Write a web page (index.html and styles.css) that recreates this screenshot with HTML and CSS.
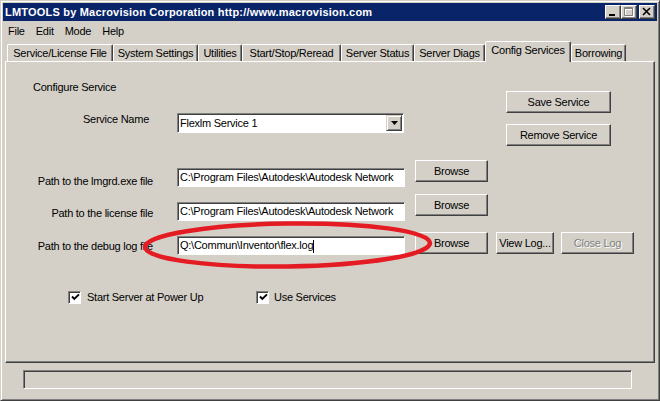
FILE: index.html
```html
<!DOCTYPE html>
<html lang="en">
<head>
    <meta charset="UTF-8">
    <title>LMTOOLS</title>
    <link rel="stylesheet" href="styles.css">
</head>
<body>

    <div class="window">
        <div class="titlebar">
            <span class="title">LMTOOLS by Macrovision Corporation http://www.macrovision.com</span>
            <div class="caption-buttons">
                <span class="cap-btn"><svg width="14" height="12" viewBox="0 0 14 12"><rect x="3" y="8" width="6" height="2" fill="#000"/></svg></span>
                <span class="cap-btn"><svg width="14" height="12" viewBox="0 0 14 12"><path d="M3.5 2.5h8v8h-8z M3 3.5h9" fill="none" stroke="#fff" stroke-width="1"/><path d="M2.5 1.5h8v8h-8z M2 2.5h9" fill="none" stroke="#808080" stroke-width="1"/></svg></span>
                <span class="cap-btn close"><svg width="14" height="12" viewBox="0 0 14 12"><path d="M3 2 L10 9 M10 2 L3 9" stroke="#000" stroke-width="1.6"/></svg></span>
            </div>
        </div>

        <div class="menubar">
            <span>File</span>
            <span>Edit</span>
            <span>Mode</span>
            <span>Help</span>
        </div>

        <div class="tabs">
            <div class="tab" style="width:106px">Service/License File</div>
            <div class="tab" style="width:85px">System Settings</div>
            <div class="tab" style="width:44px">Utilities</div>
            <div class="tab" style="width:99px">Start/Stop/Reread</div>
            <div class="tab" style="width:73px">Server Status</div>
            <div class="tab" style="width:71px">Server Diags</div>
            <div class="tab active" style="width:86px">Config Services</div>
            <div class="tab" style="width:55px">Borrowing</div>
        </div>

        <div class="panel">
            <div class="top">
                <div class="top-left">
                    <div class="heading">Configure Service</div>
                    <div class="service-row">
                        <div class="label">Service Name</div>
                        <div class="combo">
                            <span class="combo-text">Flexlm Service 1</span>
                            <span class="drop-btn"><svg width="7" height="4" viewBox="0 0 7 4"><path d="M0 0h7L3.5 4z" fill="#000"/></svg></span>
                        </div>
                    </div>
                </div>
                <div class="top-right">
                    <div class="btn save">Save Service</div>
                    <div class="btn remove">Remove Service</div>
                </div>
            </div>

            <div class="path-row row-exe">
                <div class="label">Path to the lmgrd.exe file</div>
                <div class="field">C:\Program Files\Autodesk\Autodesk Network</div>
                <div class="btn browse">Browse</div>
            </div>

            <div class="path-row row-lic">
                <div class="label">Path to the license file</div>
                <div class="field">C:\Program Files\Autodesk\Autodesk Network</div>
                <div class="btn browse">Browse</div>
            </div>

            <div class="path-row row-log">
                <div class="label">Path to the debug log file</div>
                <div class="field">Q:\Commun\Inventor\flex.log<span class="caret"></span></div>
                <div class="btn browse">Browse</div>
                <div class="btn view-log">View Log...</div>
                <div class="btn close-log disabled">Close Log</div>
            </div>

            <div class="checks">
                <label class="check">
                    <span class="box"><svg width="9" height="9" viewBox="0 0 9 9"><path d="M1 3.5 L3.3 6 L8 1.3" fill="none" stroke="#000" stroke-width="1.9"/></svg></span>
                    <span class="check-text">Start Server at Power Up</span>
                </label>
                <label class="check">
                    <span class="box"><svg width="9" height="9" viewBox="0 0 9 9"><path d="M1 3.5 L3.3 6 L8 1.3" fill="none" stroke="#000" stroke-width="1.9"/></svg></span>
                    <span class="check-text">Use Services</span>
                </label>
            </div>
        </div>

        <div class="statusbar"></div>
    </div>

    <!-- red marker someone drew over the screenshot -->
    <svg class="annotation" width="660" height="401" viewBox="0 0 660 401">
        <ellipse cx="287.5" cy="245" rx="142.5" ry="21.5" transform="rotate(-0.8 287.5 245)" fill="none" stroke="#e41b23" stroke-width="4.5"/>
    </svg>

</body>
</html>
```

FILE: styles.css
```css
* {
    margin: 0;
    padding: 0;
    box-sizing: border-box;
}
body {
    font-family: 'Liberation Sans', Arial, sans-serif;
    font-size: 11px;
    letter-spacing: -0.25px;
    color: #000;
    background: #d4d0c8;
    width: 660px;
    height: 401px;
    overflow: hidden;
    position: relative;
}
.window {
    width: 660px;
    height: 401px;
    background: #d4d0c8;
    border: 1px solid;
    border-color: #d4d0c8 #404040 #404040 #d4d0c8;
    box-shadow: inset 1px 1px #fff, inset -1px -1px #808080;
    padding: 2px;
    display: flex;
    flex-direction: column;
}

/* title bar */
.titlebar {
    height: 18px;
    background: #0a246a;
    color: #fff;
    display: flex;
    align-items: center;
    justify-content: space-between;
    padding: 0 2px;
}
.title {
    font-weight: bold;
    font-size: 11px;
    letter-spacing: 0.2px;
}
.caption-buttons { display: flex; }
.cap-btn {
    width: 16px;
    height: 14px;
    background: #d4d0c8;
    border: 1px solid;
    border-color: #fff #404040 #404040 #fff;
    box-shadow: inset -1px -1px #808080;
    display: flex;
}
.cap-btn.close { margin-left: 2px; }

/* menu */
.menubar {
    height: 19px;
    display: flex;
    align-items: center;
    gap: 11px;
    padding-left: 5px;
}

/* tabs */
.tabs {
    display: flex;
    align-items: flex-end;
    height: 20px;
    margin: 1px 0 0 4px;
    position: relative;
    z-index: 1;
}
.tab {
    height: 17px;
    border: 1px solid;
    border-bottom: none;
    border-color: #fff #404040 transparent #fff;
    box-shadow: inset -1px 0 #808080;
    border-radius: 2px 2px 0 0;
    text-align: center;
    line-height: 16px;
    white-space: nowrap;
}
.tab.active {
    height: 21px;
    margin-bottom: -1px;
    background: #d4d0c8;
    line-height: 17px;
}

/* tab page */
.panel {
    width: 650px;
    height: 302px;
    margin-left: 2px;
    border: 1px solid;
    border-color: #fff #404040 #404040 #fff;
    box-shadow: inset -1px -1px #808080;
    padding-top: 19px;
}
.label {
    line-height: 13px;
    text-align: right;
    white-space: nowrap;
}
.top { display: flex; }
.top-left { width: 400px; }
.heading {
    margin-left: 27px;
    line-height: 13px;
}
.service-row {
    display: flex;
    margin-top: 19px;
}
.service-row .label { width: 143px; }
.combo {
    margin-left: 28px;
    width: 227px;
    height: 20px;
    background: #fff;
    border: 1px solid;
    border-color: #808080 #fff #fff #808080;
    box-shadow: inset 1px 1px #404040;
    display: flex;
    align-items: center;
    padding-left: 2px;
}
.combo-text { flex: 1; }
.drop-btn {
    width: 16px;
    height: 16px;
    margin-right: 1px;
    background: #d4d0c8;
    border: 1px solid;
    border-color: #d4d0c8 #404040 #404040 #d4d0c8;
    box-shadow: inset 1px 1px #fff, inset -1px -1px #808080;
    display: flex;
    justify-content: center;
    align-items: center;
}
.top-right {
    margin-left: 100px;
    display: flex;
    flex-direction: column;
}
.btn {
    height: 22px;
    background: #d4d0c8;
    border: 1px solid;
    border-color: #fff #404040 #404040 #fff;
    box-shadow: inset -1px -1px #808080;
    display: flex;
    justify-content: center;
    align-items: center;
    white-space: nowrap;
}
.btn.save { width: 105px; margin-top: 10px; }
.btn.remove { width: 105px; margin-top: 11px; }
.btn.disabled {
    color: #808080;
    text-shadow: 1px 1px 0 #fff;
}

.path-row {
    display: flex;
    align-items: flex-start;
}
.path-row .label { width: 147px; }
.field {
    margin-left: 24px;
    width: 228px;
    height: 19px;
    background: #fff;
    border: 1px solid;
    border-color: #808080 #fff #fff #808080;
    box-shadow: inset 1px 1px #404040;
    padding: 0 2px;
    line-height: 17px;
    white-space: nowrap;
    overflow: hidden;
}
.caret {
    display: inline-block;
    width: 1px;
    height: 13px;
    background: #000;
    vertical-align: middle;
}
.btn.browse { width: 73px; margin-left: 10px; }
.btn.view-log { width: 58px; margin-left: 8px; }
.btn.close-log { width: 73px; margin-left: 7px; }

.row-exe { margin-top: 14px; }
.row-exe .label { margin-top: 15px; }
.row-exe .field { margin-top: 8px; }
.row-lic { margin-top: 6px; }
.row-lic .label { margin-top: 13px; }
.row-lic .field { margin-top: 8px; }
.row-log { margin-top: 11px; }
.row-log .label { margin-top: 8px; }
.row-log .field { margin-top: 4px; }

.checks {
    display: flex;
    align-items: center;
    height: 14px;
    margin: 35px 0 0 62px;
}
.check {
    display: flex;
    align-items: center;
}
.check:first-child { width: 188px; }
.box {
    width: 13px;
    height: 13px;
    background: #fff;
    border: 1px solid;
    border-color: #808080 #fff #fff #808080;
    box-shadow: inset 1px 1px #404040;
    display: flex;
    justify-content: center;
    align-items: center;
    padding: 1px 0 0 1px;
}
.check-text { margin-left: 6px; }
.check + .check .check-text { margin-left: 5px; }

.statusbar {
    width: 609px;
    height: 19px;
    margin: 7px 0 0 20px;
    border: 1px solid;
    border-color: #808080 #fff #fff #808080;
    box-shadow: inset 1px 1px #404040;
}

.annotation {
    position: absolute;
    left: 0;
    top: 0;
    pointer-events: none;
}
```
